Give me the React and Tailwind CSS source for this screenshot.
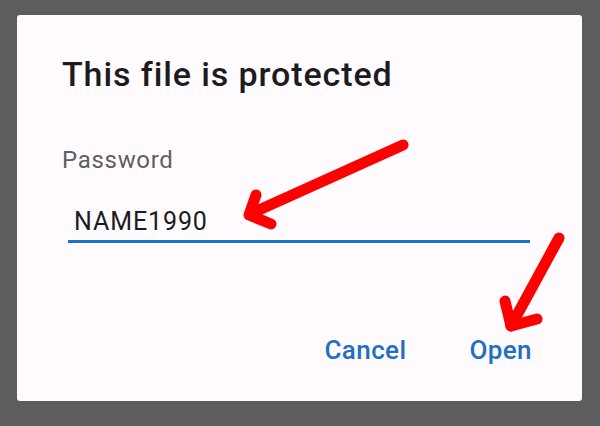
const font = { fontFamily: "Roboto, 'Noto Sans', sans-serif" };

const App = () => {
  return (
    <div
      className="relative w-[600px] h-[426px] bg-[#5d5d5f] pt-[15px] pl-[17px] overflow-hidden"
      style={font}
    >
      <div className="w-[565px] h-[386px] rounded-[3px] bg-[#fffbfe] pt-[39px] pl-[45px] pr-[50px] flex flex-col">
        <h2 className="text-[34px] leading-[40px] font-medium tracking-[0.9px] text-[#1c1b1f]">This file is protected</h2>

        <label className="mt-[52px] text-[24px] leading-[28px] tracking-[0.7px] text-[#5f5e62]">Password</label>

        <div className="mt-[33px] ml-[6px] w-[462px] border-b-[3px] border-[#1b6fcf] pb-[3px] pl-[6px]">
          <span className="block text-[25px] leading-[30px] tracking-[0.9px] text-[#1c1b1f]">NAME1990</span>
        </div>

        <div className="mt-[93px] flex justify-end items-center gap-[63px]">
          <button className="text-[26px] leading-[28px] font-medium tracking-[0.4px] text-[#1f6fc6]">Cancel</button>
          <button className="text-[26px] leading-[28px] font-medium tracking-[0.4px] text-[#1f6fc6]">Open</button>
        </div>
      </div>

      {/* red arrows drawn over the dialog */}
      <svg
        className="absolute inset-0 pointer-events-none"
        width="600"
        height="426"
        viewBox="0 0 600 426"
        fill="none"
        stroke="#ff0000"
        strokeWidth="11"
        strokeLinecap="round"
        strokeLinejoin="round"
      >
        <path d="M403 145 L250 214" />
        <path d="M256 195 L249 215 L271 224" />
        <path d="M559 238 L511 326" />
        <path d="M505 301 L511 326 L537 319" />
      </svg>
    </div>
  );
};

export default App;
